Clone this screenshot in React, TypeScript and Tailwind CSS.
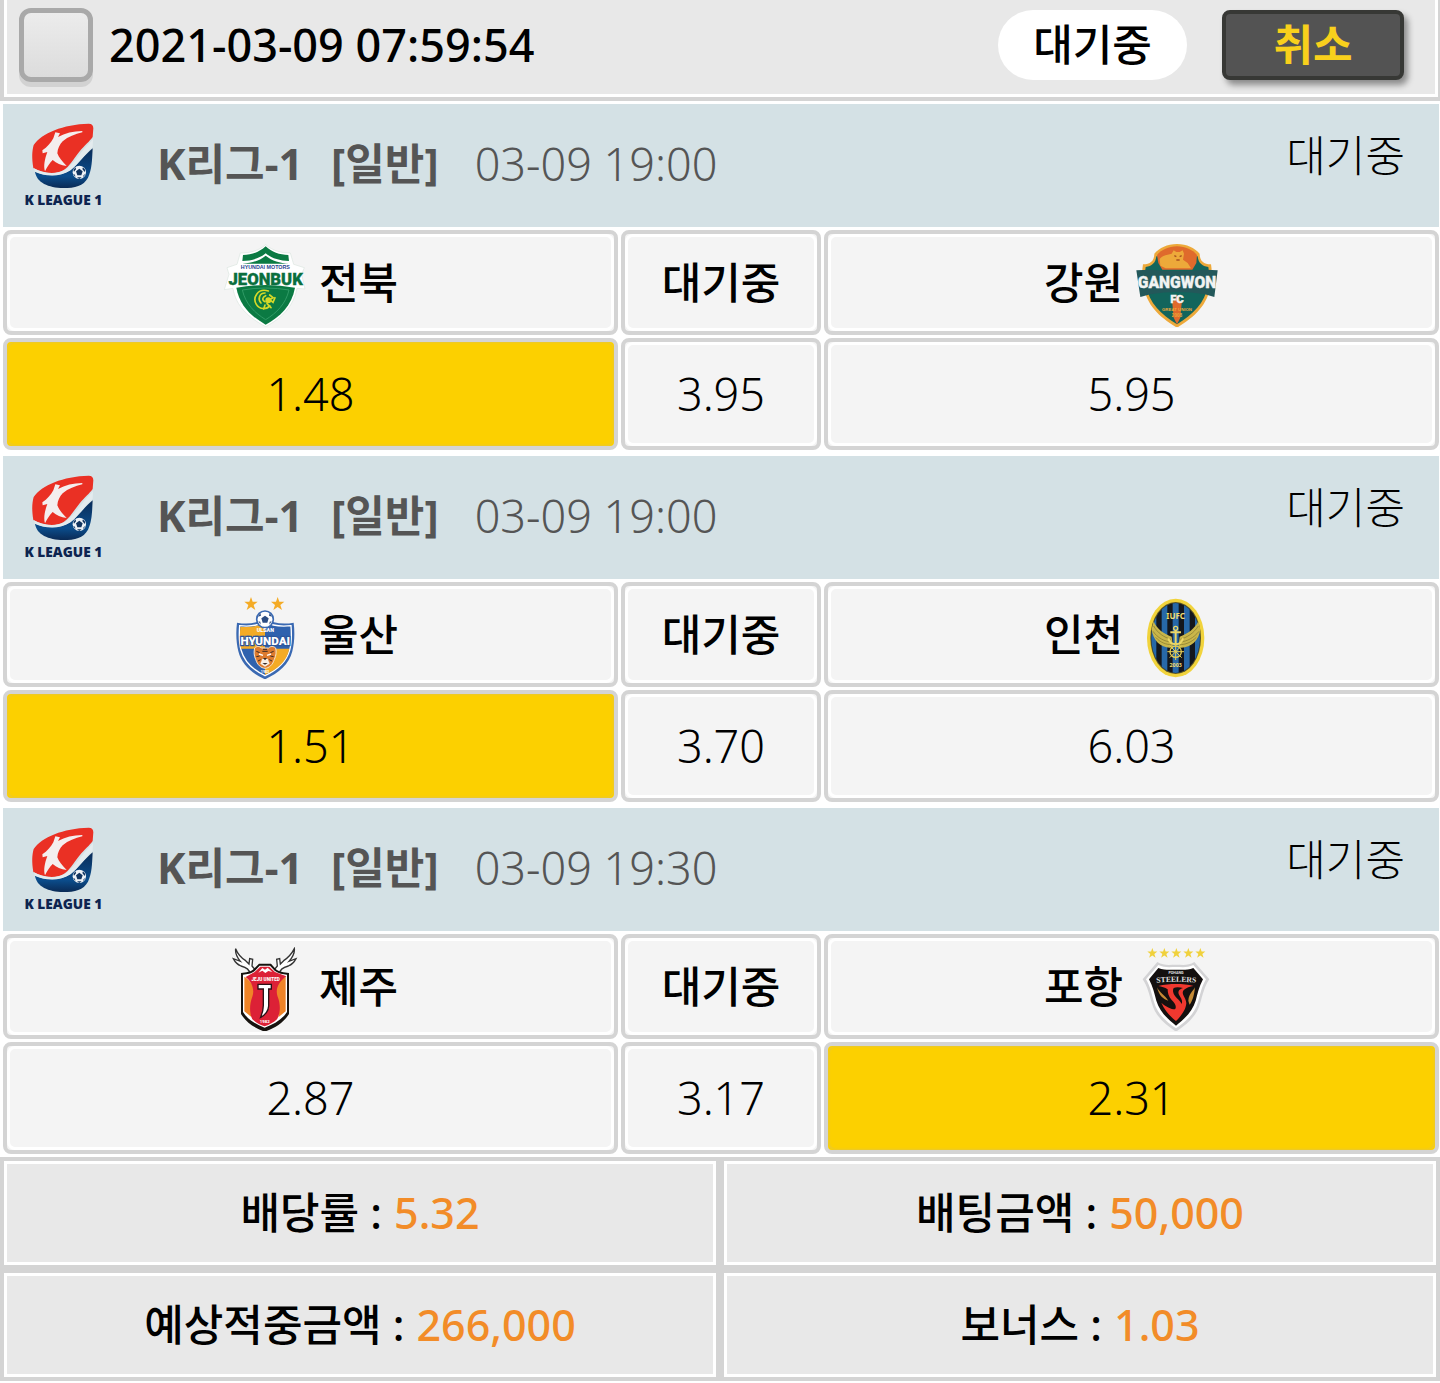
import { useState } from "react";
import { clsx } from "clsx";

type Side = "home" | "draw" | "away";

type Match = {
  id: number;
  league: string;
  kind: string;
  time: string;
  status: string;
  home: string;
  away: string;
  HomeLogo: () => React.ReactNode;
  AwayLogo: () => React.ReactNode;
  odds: Record<Side, string>;
  pick: Side;
};

const CELL_CLASS =
  "rounded-lg border-4 border-[#d4d4d4] p-0 text-center inset-ring-3 inset-ring-white";

const STAR =
  "M0 -21 L5 -7 L20 -7 L8 3 L13 18 L0 9 L-13 18 L-8 3 L-20 -7 L-5 -7 Z";

const MATCHES: Match[] = [
  {
    id: 1,
    league: "K리그-1",
    kind: "[일반]",
    time: "03-09 19:00",
    status: "대기중",
    home: "전북",
    away: "강원",
    HomeLogo: JeonbukLogo,
    AwayLogo: GangwonLogo,
    odds: { home: "1.48", draw: "3.95", away: "5.95" },
    pick: "home",
  },
  {
    id: 2,
    league: "K리그-1",
    kind: "[일반]",
    time: "03-09 19:00",
    status: "대기중",
    home: "울산",
    away: "인천",
    HomeLogo: UlsanLogo,
    AwayLogo: IncheonLogo,
    odds: { home: "1.51", draw: "3.70", away: "6.03" },
    pick: "home",
  },
  {
    id: 3,
    league: "K리그-1",
    kind: "[일반]",
    time: "03-09 19:30",
    status: "대기중",
    home: "제주",
    away: "포항",
    HomeLogo: JejuLogo,
    AwayLogo: PohangLogo,
    odds: { home: "2.87", draw: "3.17", away: "2.31" },
    pick: "away",
  },
];

const TOTALS = [
  { label: "배당률", value: "5.32" },
  { label: "배팅금액", value: "50,000" },
  { label: "예상적중금액", value: "266,000" },
  { label: "보너스", value: "1.03" },
];

export default function App() {
  const [checked, setChecked] = useState(false);

  return (
    <main className="overflow-x-hidden bg-white font-['Noto_Sans','Noto_Sans_CJK_KR',sans-serif] text-[43px] leading-[60px] text-black">
      <header className="flex h-[101px] items-start border-r-2 border-b-4 border-l-4 border-[#d4d4d4] bg-white px-[3px] pb-[3px]">
        <div className="flex h-full flex-1 items-start bg-[#e8e8e8] pr-[31px] pl-3">
          <label className="flex items-center pt-2 text-[45px] font-medium">
            <input
              type="checkbox"
              checked={checked}
              onChange={(e) => setChecked(e.target.checked)}
              className="mr-4 h-[74px] w-[74px] appearance-none rounded-xl border-5 border-[#a9a9a9] bg-linear-to-b from-[#ececec] to-[#dcdcdc] shadow-[0_5px_0_#d2d2d2] checked:bg-[#bdbdbd]"
            />
            2021-03-09 07:59:54
          </label>
          <span className="mt-2.5 ml-auto flex h-[70px] w-[189px] items-center justify-center rounded-full bg-white font-medium">
            대기중
          </span>
          <button
            type="button"
            className="mt-2.5 ml-[35px] h-[70px] w-[182px] rounded-lg border-4 border-[#373835] bg-[#535353] font-bold text-[#f8d01c] shadow-[4px_5px_6px_#00000066]"
          >
            취소
          </button>
        </div>
      </header>

      {MATCHES.map((m) => (
        <MatchBlock key={m.id} match={m} />
      ))}

      <dl className="grid grid-cols-2">
        {TOTALS.map((t) => (
          <div
            key={t.label}
            className="flex h-28 items-center justify-center gap-3 border-4 border-[#d4d4d4] bg-[#e8e8e8] font-medium inset-ring-3 inset-ring-white"
          >
            <dt>{t.label} :</dt>
            <dd className="text-[#f28c28]">{t.value}</dd>
          </div>
        ))}
      </dl>
    </main>
  );
}

function MatchBlock({ match: m }: { match: Match }) {
  const sides: Side[] = ["home", "draw", "away"];

  return (
    <section className="mt-[3px]">
      <div className="mr-px ml-[3px] flex h-[123px] items-center bg-[#d4e1e5] pr-[34px] pl-[17px] text-[#555]">
        <KLeagueLogo />
        <h2 className="ml-[50px] flex pb-1 font-bold">
          <span>{m.league}</span>
          <span className="ml-7">{m.kind}</span>
        </h2>
        <time className="ml-9 pb-1 text-[45px] font-light">{m.time}</time>
        <span className="ml-auto pb-5 font-light text-black">{m.status}</span>
      </div>

      <div className="-mr-0.5">
        <table className="w-full table-fixed border-separate border-spacing-[3px]">
          <colgroup>
            <col className="w-[43%]" />
            <col className="w-[14%]" />
            <col className="w-[43%]" />
          </colgroup>
          <thead>
            <tr className="h-[105px]">
              <th scope="col" className={clsx(CELL_CLASS, "bg-[#f4f4f4] font-medium")}>
                <span className="flex items-center justify-center gap-3 pt-1">
                  <m.HomeLogo />
                  <span className="pb-1">{m.home}</span>
                </span>
              </th>
              <th scope="col" className={clsx(CELL_CLASS, "bg-[#f4f4f4] font-medium")}>
                {m.status}
              </th>
              <th scope="col" className={clsx(CELL_CLASS, "bg-[#f4f4f4] font-medium")}>
                <span className="flex items-center justify-center gap-3 pt-1">
                  <span className="pb-1">{m.away}</span>
                  <m.AwayLogo />
                </span>
              </th>
            </tr>
          </thead>
          <tbody>
            <tr className="h-28 text-[45px]">
              {sides.map((side) => (
                <td
                  key={side}
                  className={
                    side === m.pick
                      ? "rounded-lg border-4 border-[#d4d4d4] bg-[#fcd000] p-0 text-center font-light inset-shadow-[0_0_3px_#d8c060]"
                      : clsx(CELL_CLASS, "bg-[#f4f4f4] font-light")
                  }
                >
                  {m.odds[side]}
                </td>
              ))}
            </tr>
          </tbody>
        </table>
      </div>
    </section>
  );
}

function KLeagueLogo() {
  return (
    <svg viewBox="30 30 261 270" className="h-[90px] w-[87px]" role="img" aria-label="K LEAGUE 1">
      <defs>
        <linearGradient id="kl-blue" x1="0" y1="0" x2="0" y2="1">
          <stop offset="0" stopColor="#0a2c58" />
          <stop offset="0.7" stopColor="#0b4d8c" />
          <stop offset="1" stopColor="#0a2a55" />
        </linearGradient>
      </defs>
      <path
        d="M75 182 C110 196 150 198 180 178 C205 160 225 130 248 112 C246 150 246 175 234 200 C220 225 195 231 160 231 C115 230 80 215 75 182 Z"
        fill="url(#kl-blue)"
      />
      <path
        d="M70 171 C65 140 66 120 71 102 C95 66 160 40 236 38 C246 38 250 43 250 52 L248 78 C238 92 225 102 208 122 C190 145 178 166 160 178 C130 193 95 184 70 171 Z"
        fill="#ea3024"
      />
      <path
        d="M72 172 C100 190 140 192 170 174 C194 154 213 122 249 84 L248 108 C225 128 208 156 182 178 C150 200 100 196 75 182 Z"
        fill="#e3ebee"
      />
      <path
        d="M217 60 C190 60 165 66 144 78 L150 67 L136 64 L130 82 C122 96 112 108 97 118 L98 127 L112 123 C104 145 100 165 105 181 C112 167 118 157 128 147 C140 157 152 163 170 165 C156 151 146 139 142 127 C143 113 149 101 158 91 C175 77 195 69 217 64 Z"
        fill="#f4eeee"
      />
      <circle cx="208" cy="184" r="20" fill="#eef2f6" />
      <path
        d="M208 173 L218 181 L214 193 L202 193 L198 181 Z M190 176 L197 169 L198 175 L192 182 Z M219 169 L226 177 L224 183 L217 174 Z M201 199 L215 199 L208 204 Z M189 189 L195 191 L196 198 Z M227 189 L221 192 L219 199 Z"
        fill="#11345f"
      />
      <text
        x="160"
        y="281"
        textAnchor="middle"
        fontSize="41"
        fontWeight="800"
        fill="#0d2450"
        className="font-['Open_Sans',sans-serif]"
      >
        K LEAGUE 1
      </text>
    </svg>
  );
}

function JeonbukLogo() {
  return (
    <svg viewBox="24 24 252 252" className="size-[84px]" role="img" aria-label="전북 로고">
      <path
        d="M152 29 C130 48 104 54 76 54 L66 88 L36 98 L42 118 L28 164 L54 160 C62 214 104 250 152 275 C200 250 236 214 246 160 L270 162 L260 118 L268 98 L236 88 L226 54 C200 54 174 48 152 29 Z"
        fill="#fff"
        stroke="#dbe6e0"
        strokeWidth="2"
      />
      <path
        d="M152 34 C134 51 110 60 84 60 L82 78 C110 77 134 70 152 55 C170 70 194 77 222 78 L220 60 C194 60 170 51 152 34 Z"
        fill="#0b7a43"
      />
      <path d="M152 62 C132 78 110 84 82 86 L222 86 C194 84 172 78 152 62 Z" fill="#0b7a43" />
      <path
        d="M64 158 Q152 142 240 158 C230 212 196 244 152 269 C108 244 74 212 64 158 Z"
        fill="#0b7a43"
      />
      <path
        d="M82 165 Q152 153 222 165 C212 208 184 234 152 254 C120 234 92 208 82 165 Z"
        fill="none"
        stroke="#2f9a65"
        strokeWidth="3"
      />
      <g fill="none" stroke="#d5d828" strokeWidth="5" strokeLinecap="round">
        <path d="M160 168 C128 158 112 188 124 208 C134 224 156 224 164 212" />
        <path d="M150 174 C132 174 128 194 138 204 M152 182 C142 186 140 196 150 200" />
        <path d="M164 180 L174 188 L164 194 L174 202 L180 188 M156 206 L168 218 M150 210 L146 222" />
      </g>
      <circle cx="160" cy="196" r="9" fill="#d5d828" />
      <text
        x="151"
        y="102"
        textAnchor="middle"
        fontSize="16"
        fontWeight="700"
        fill="#26418f"
        className="font-['Liberation_Sans',sans-serif]"
      >
        HYUNDAI MOTORS
      </text>
      <text
        x="152"
        y="149"
        textAnchor="middle"
        fontSize="50"
        fontWeight="900"
        fill="#0b6f3e"
        stroke="#0b6f3e"
        className="font-['Roboto',sans-serif]"
      >
        JEONBUK
      </text>
    </svg>
  );
}

function GangwonLogo() {
  return (
    <svg viewBox="288 24 252 252" className="size-[84px]" role="img" aria-label="강원 로고">
      <path
        d="M414 27 C384 28 362 38 346 56 C346 78 334 88 312 88 C308 110 310 130 314 152 C322 210 362 246 414 278 C466 246 506 210 514 152 C518 130 520 110 516 88 C494 88 482 78 482 56 C466 38 444 28 414 27 Z"
        fill="#eda93a"
      />
      <path
        d="M352 64 C350 84 338 94 320 96 C316 116 318 134 322 154 C330 204 366 238 414 268 C462 238 498 204 506 154 C510 134 512 116 508 96 C490 94 478 84 476 64 Z"
        fill="#12655c"
      />
      <path
        d="M414 34 C388 35 368 44 354 60 L358 84 L370 104 L460 104 L472 84 L474 60 C460 44 440 35 414 34 Z"
        fill="#df6a2c"
      />
      <path
        d="M398 56 L404 46 L412 51 L422 51 L431 46 L435 56 L432 74 L446 84 L456 100 L380 100 L364 92 L362 72 C372 60 386 60 398 56 Z"
        fill="#eda93a"
      />
      <path d="M406 62 L412 65 M428 62 L422 65 M412 75 L422 75" stroke="#a8501f" strokeWidth="4" />
      <path d="M414 180 L428 205 L424 248 L414 268 L404 248 L400 205 Z" fill="#df6a2c" />
      <path
        d="M292 106 L332 104 Q414 112 500 104 L536 106 L526 186 L498 178 Q414 164 334 178 L304 186 Z"
        fill="#23585a"
      />
      <g
        textAnchor="middle"
        fontWeight="900"
        className="font-['Roboto',sans-serif]"
        fill="#f1f3f2"
        stroke="#f1f3f2"
      >
        <text x="414" y="159" fontSize="47" strokeWidth="1">
          GANGWON
        </text>
        <text x="414" y="203" fontSize="34" strokeWidth="1">
          FC
        </text>
      </g>
      <g
        textAnchor="middle"
        fontWeight="700"
        fill="#eda93a"
        className="font-['Liberation_Sans',sans-serif]"
      >
        <text x="414" y="228" fontSize="13">
          GREAT UNION
        </text>
        <text x="414" y="245" fontSize="14">
          2008
        </text>
      </g>
    </svg>
  );
}

function UlsanLogo() {
  return (
    <svg viewBox="24 15 252 252" className="size-[84px]" role="img" aria-label="울산 로고">
      <path d={STAR} transform="translate(108 42)" fill="#f4ab26" />
      <path d={STAR} transform="translate(188 42)" fill="#f4ab26" />
      <path
        d="M150 84 C128 100 98 104 66 98 C62 130 64 160 70 184 C80 224 110 250 150 268 C190 250 222 224 232 184 C238 160 240 130 236 98 C204 104 172 100 150 84 Z"
        fill="#3a69b2"
      />
      <path
        d="M150 94 C128 108 100 110 74 107 C72 134 72 158 78 180 C88 216 114 240 150 257 C186 240 214 216 224 180 C230 158 230 134 228 107 C202 110 172 108 150 94 Z"
        fill="#2f62ae"
        stroke="#fff"
        strokeWidth="4"
      />
      <path d="M150 98 C128 110 102 112 76 110 C74 134 74 156 78 176 L150 176 Z" fill="#f4ab26" />
      <path d="M150 176 L223 176 C216 214 186 238 150 254 Z" fill="#f4ab26" />
      <circle cx="150" cy="88" r="25" fill="#fff" stroke="#3a69b2" strokeWidth="5" />
      <path
        d="M150 77 L161 85 L157 98 L143 98 L139 85 Z M129 80 L136 69 L138 77 Z M171 80 L164 69 L162 77 Z M130 94 L137 104 L136 95 Z M170 94 L163 104 L164 95 Z"
        fill="#2c4c82"
      />
      <g textAnchor="middle" fontWeight="900" className="font-['Roboto',sans-serif]">
        <text x="151" y="126" fontSize="16" fill="#fff">
          ULSAN
        </text>
        <text
          x="151"
          y="164"
          fontSize="35"
          fill="#fff"
          stroke="#2c569b"
          strokeWidth="7"
          paintOrder="stroke"
        >
          HYUNDAI
        </text>
      </g>
      <path
        d="M119 174 C126 167 135 169 139 174 L161 174 C166 168 176 168 182 174 C185 186 183 198 178 208 C173 225 162 234 150 235 C138 234 127 225 122 208 C117 198 116 186 119 174 Z"
        fill="#dd7b2f"
        stroke="#f6e5cf"
        strokeWidth="3"
      />
      <path
        d="M144 178 L156 178 M142 184 L158 184 M124 184 L134 188 M176 184 L166 188 M124 200 L134 198 M176 200 L166 198 M129 213 L137 209 M171 213 L163 209"
        stroke="#3a2b26"
        strokeWidth="3"
      />
      <path d="M132 192 L144 196 M168 192 L156 196" stroke="#fff" strokeWidth="4" />
      <path d="M142 206 L158 206 L164 221 L150 230 L136 221 Z" fill="#f8efe4" />
      <path d="M144 204 L156 204 L150 211 Z M142 219 L158 219 L150 224 Z" fill="#3a2b26" />
      <text
        x="150"
        y="248"
        textAnchor="middle"
        fontSize="11"
        fontWeight="700"
        fill="#fff"
        className="font-['Roboto',sans-serif]"
      >
        1983
      </text>
    </svg>
  );
}

function IncheonLogo() {
  return (
    <svg viewBox="288 15 252 252" className="size-[84px]" role="img" aria-label="인천 로고">
      <defs>
        <clipPath id="incheon-oval">
          <ellipse cx="410" cy="144" rx="73" ry="105" />
        </clipPath>
      </defs>
      <ellipse cx="410" cy="144" rx="86" ry="118" fill="#f1d33b" />
      <ellipse cx="410" cy="144" rx="76" ry="108" fill="#5b5426" />
      <g clipPath="url(#incheon-oval)">
        <path d="M330 30 H490 V260 H330 Z" fill="#14171d" />
        <path
          d="M336 30 h16 v230 h-16 Z M368 30 h17 v230 h-17 Z M401 30 h18 v230 h-18 Z M435 30 h17 v230 h-17 Z M468 30 h16 v230 h-16 Z"
          fill="#2768a8"
        />
      </g>
      <path
        d="M344 94 C352 116 374 132 398 140 L402 172 C372 178 342 156 338 118 Z M478 94 C468 116 446 132 422 140 L418 172 C448 178 480 156 484 118 Z"
        fill="#c9b64a"
      />
      <path
        d="M344 108 C356 130 376 142 396 148 M342 124 C356 144 376 154 396 156 M350 142 C364 158 382 164 398 164 M478 108 C464 130 444 142 424 148 M480 124 C464 144 444 154 424 156 M472 142 C456 158 438 164 422 164"
        fill="none"
        stroke="#80742e"
        strokeWidth="2"
      />
      <g fill="none" stroke="#ecd768" strokeWidth="6">
        <circle cx="410" cy="115" r="6" strokeWidth="4" />
        <path d="M410 120 V163 M394 127 H426 M388 145 C392 161 402 163 410 163 C418 163 428 161 432 145" />
      </g>
      <g fill="none" stroke="#e4cd55" strokeWidth="4">
        <circle cx="410" cy="185" r="17" />
        <path d="M410 160 V210 M385 185 H435 M392 167 L428 203 M428 167 L392 203" strokeWidth="3" />
      </g>
      <g
        textAnchor="middle"
        fontWeight="700"
        fill="#f1df72"
        className="font-['Noto_Sans',sans-serif]"
      >
        <text x="410" y="86" fontSize="24">
          IUFC
        </text>
        <text x="410" y="230" fontSize="16">
          2003
        </text>
      </g>
    </svg>
  );
}

function JejuLogo() {
  return (
    <svg viewBox="24 21 252 252" className="size-[84px]" role="img" aria-label="제주 로고">
      <path
        d="M104 100 C104 88 92 82 78 78 C68 74 60 66 55 56 L76 64 C66 52 60 40 62 26 C68 42 80 54 92 62 L102 72 L104 56 L113 58 L111 78 L121 90 Z M194 100 C194 88 206 82 220 78 C230 74 238 66 243 56 L222 64 C232 52 240 40 238 26 C230 42 218 54 206 62 L196 72 L194 56 L185 58 L187 78 L177 90 Z"
        fill="#fff"
        stroke="#333"
        strokeWidth="4"
      />
      <path
        d="M132 71 H168 L182 87 C192 96 206 97 222 99 V222 C206 248 180 264 149 275 C118 264 94 248 78 222 V99 C94 97 108 96 116 87 Z"
        fill="#17130f"
      />
      <path
        d="M134 77 H165 L179 92 C190 101 204 102 216 104 V216 C202 238 178 252 149 263 C120 252 98 238 84 216 V104 C96 102 110 101 120 92 Z"
        fill="#fff"
      />
      <path
        d="M88 110 C108 122 124 146 116 172 C110 190 106 208 110 232 L88 214 Z M212 110 C190 122 174 146 184 172 C190 190 194 208 190 232 L212 214 Z"
        fill="#f08427"
      />
      <path
        d="M119 96 L136 80 H163 L180 96 L214 109 C190 126 180 148 188 170 C196 190 198 216 186 238 C176 248 164 254 149 259 C134 254 122 248 112 238 C102 216 104 190 112 170 C120 148 110 126 92 111 Z"
        fill="#dc2136"
      />
      <path d="M130 98 L142 84 L150 89 L158 83 L172 96 L160 93 L151 99 L142 92 Z" fill="#fff" />
      <text
        x="152"
        y="122"
        textAnchor="middle"
        fontSize="14"
        fontWeight="900"
        fill="#fff"
        className="font-['Roboto',sans-serif]"
      >
        JEJU UNITED
      </text>
      <path
        d="M129 133 H169 V147 H161 V198 C160 214 150 225 137 232 C143 218 145 208 145 196 V147 H129 Z"
        fill="#fff"
        stroke="#2b1116"
        strokeWidth="4"
      />
      <text
        x="149"
        y="250"
        textAnchor="middle"
        fontSize="13"
        fontWeight="700"
        fill="#fff"
        className="font-['Roboto',sans-serif]"
      >
        1982
      </text>
    </svg>
  );
}

function PohangLogo() {
  return (
    <svg viewBox="288 21 252 252" className="size-[84px]" role="img" aria-label="포항 로고">
      {[340, 376, 412, 448, 484].map((x) => (
        <path key={x} d={STAR} transform={`translate(${x} 40) scale(0.75)`} fill="#f0d13c" />
      ))}
      <path
        d="M355 66 C374 78 394 74 411 74 C428 74 448 78 466 66 L511 118 C496 140 492 162 484 188 C474 226 446 252 411 275 C376 252 348 226 338 188 C330 162 326 140 311 118 Z"
        fill="#d3d3d5"
      />
      <path
        d="M358 75 C376 84 394 81 411 81 C428 81 446 84 463 75 L501 118 C488 140 484 162 477 186 C468 220 442 244 411 265 C380 244 354 220 345 186 C338 162 334 140 321 118 Z"
        fill="#fff"
      />
      <path
        d="M358 84 C376 91 394 89 411 89 C428 89 446 91 463 84 L492 118 C480 140 476 160 470 182 C461 212 438 236 411 257 C384 236 361 212 352 182 C346 160 342 140 330 118 Z"
        fill="#14100f"
      />
      {/* red S with the two gold flames beside it */}
      <path
        d="M358 138 C392 130 432 130 464 138 C448 140 436 146 432 154 C428 166 442 174 442 190 C440 212 424 230 411 243 C394 230 376 210 367 188 C380 200 396 208 408 208 C414 200 408 190 398 180 C388 170 386 158 386 148 C378 142 368 140 358 138 Z"
        fill="#f0382f"
      />
      <path
        d="M404 144 C412 140 424 142 432 144 C420 148 416 154 420 164 C426 174 432 182 428 192 C424 182 414 176 408 168 C402 160 400 150 404 144 Z"
        fill="#14100f"
      />
      <path
        d="M354 142 C362 158 378 166 388 182 C374 178 360 168 354 142 Z M468 142 C462 154 450 160 448 182 C450 190 452 194 452 194 C462 182 466 162 468 142 Z"
        fill="#c58a35"
      />
      <defs>
        <path id="pohang-arc" d="M344 129 Q411 121 480 129" />
      </defs>
      <g textAnchor="middle" fontWeight="700" fill="#e4e4e4">
        <text x="411" y="102" fontSize="11" className="font-['Roboto',sans-serif]">
          POHANG
        </text>
        <text fontSize="23" className="font-['Liberation_Serif',serif]">
          <textPath href="#pohang-arc" startOffset="50%">
            STEELERS
          </textPath>
        </text>
      </g>
    </svg>
  );
}
